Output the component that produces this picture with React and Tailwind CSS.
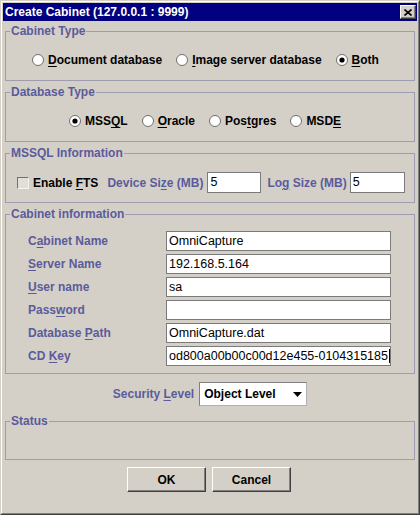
import React from "react";

const U = ({ children }) => (
  <span className="underline decoration-1 underline-offset-[2px]">{children}</span>
);

const Radio = ({ checked }) => (
  <svg width="12" height="12" viewBox="0 0 12 12" className="shrink-0">
    <circle cx="6" cy="6" r="5.5" fill="#ffffff" stroke="#6e6e6e" />
    {checked && <circle cx="6" cy="6" r="2.6" fill="#000000" />}
  </svg>
);

const RadioItem = ({ checked, children }) => (
  <div className="flex items-center gap-[4px]">
    <Radio checked={checked} />
    <span className="font-bold text-black leading-[16px]">{children}</span>
  </div>
);

function Group({ title, className, children }) {
  return (
    <div className={`mx-[2px] border border-[#a09cb0] flex flex-col ${className}`}>
      <span className="-mt-[8px] ml-[4px] px-[1px] self-start bg-[#d4d0c8] text-[#5b5b9c] font-bold leading-[14px]">
        {title}
      </span>
      {children}
    </div>
  );
}

const Field = ({ children, className }) => (
  <div
    className={`h-[20px] bg-white border border-[#7b7b7b] flex items-center pl-[2px] text-[12.5px] text-black font-normal overflow-hidden whitespace-nowrap ${className}`}
  >
    {children}
  </div>
);

const Label = ({ children, className }) => (
  <span className={`text-[#5b5b9c] font-bold leading-[16px] whitespace-nowrap ${className}`}>{children}</span>
);

const Button = ({ children }) => (
  <div className="w-[79px] h-[25px] flex items-center justify-center font-bold text-black border border-t-white border-l-white border-b-[#404040] border-r-[#404040] shadow-[inset_-1px_-1px_0_#808080]">
    {children}
  </div>
);

export default function App() {
  return (
    <div className="w-[420px] h-[515px] bg-[#d4d0c8] border border-t-[#d4d0c8] border-l-[#d4d0c8] border-b-[#404040] border-r-[#404040] font-['Liberation_Sans',Arial,sans-serif] text-[12px]">
      <div className="h-full border border-t-white border-l-white border-b-[#808080] border-r-[#808080] p-[1px] flex flex-col">
        {/* Title bar */}
        <div className="h-[18px] shrink-0 bg-[#000080] flex items-center justify-between">
          <span className="pl-[2px] text-white font-bold leading-[14px]">
            Create Cabinet (127.0.0.1 : 9999)
          </span>
          <div className="mr-[1px] w-[16px] h-[14px] bg-[#d4d0c8] border border-t-white border-l-white border-b-[#404040] border-r-[#404040] shadow-[inset_-1px_-1px_0_#808080] flex items-center justify-center">
            <svg width="8" height="7" viewBox="0 0 8 7">
              <path d="M0.5 0.5 L7.5 6.5 M7.5 0.5 L0.5 6.5" stroke="#000" strokeWidth="1.6" />
            </svg>
          </div>
        </div>

        {/* Cabinet Type */}
        <Group title="Cabinet Type" className="mt-[10px]">
          <div className="mt-[14px] mb-[12px] pr-[9px] h-[16px] flex items-center justify-center gap-[14px]">
            <RadioItem>
              <U>D</U>ocument database
            </RadioItem>
            <RadioItem>
              <U>I</U>mage server database
            </RadioItem>
            <RadioItem checked>
              <U>B</U>oth
            </RadioItem>
          </div>
        </Group>

        {/* Database Type */}
        <Group title="Database Type" className="mt-[11px]">
          <div className="mt-[14px] mb-[12px] pr-[10px] h-[16px] flex items-center justify-center gap-[14px]">
            <RadioItem checked>
              MSS<U>Q</U>L
            </RadioItem>
            <RadioItem>
              <U>O</U>racle
            </RadioItem>
            <RadioItem>
              Pos<U>t</U>gres
            </RadioItem>
            <RadioItem>
              MSD<U>E</U>
            </RadioItem>
          </div>
        </Group>

        {/* MSSQL Information */}
        <Group title="MSSQL Information" className="mt-[11px]">
          <div className="mt-[12px] mb-[9px] h-[21px] flex items-center">
            <div className="ml-[11px] w-[12px] h-[12px] bg-[#e2dfd8] border border-t-[#707070] border-l-[#707070] border-b-[#f4f4f4] border-r-[#f4f4f4]" />
            <span className="ml-[4px] font-bold text-black leading-[16px]">
              Enable <U>F</U>TS
            </span>
            <Label className="ml-[9px]">
              Device Si<U>z</U>e (MB)
            </Label>
            <Field className="ml-[4px] w-[54px] h-[21px]">5</Field>
            <Label className="ml-[6px]">
              Lo<U>g</U> Size (MB)
            </Label>
            <Field className="ml-[3px] w-[55px] h-[21px]">5</Field>
          </div>
        </Group>

        {/* Cabinet information */}
        <Group title="Cabinet information" className="mt-[11px]">
          <div className="mt-[10px] mb-[7px] ml-[22px] grid grid-cols-[138px_225px] gap-y-[3px] items-center">
            <Label>
              C<U>a</U>binet Name
            </Label>
            <Field>OmniCapture</Field>
            <Label>
              <U>S</U>erver Name
            </Label>
            <Field>192.168.5.164</Field>
            <Label>
              <U>U</U>ser name
            </Label>
            <Field>sa</Field>
            <Label>
              Pass<U>w</U>ord
            </Label>
            <Field />
            <Label>
              Database <U>P</U>ath
            </Label>
            <Field>OmniCapture.dat</Field>
            <Label>
              CD <U>K</U>ey
            </Label>
            <Field>
              <span>od800a00b00c00d12e455-0104315185</span>
              <span className="ml-[1px] w-[1px] h-[14px] bg-black shrink-0" />
            </Field>
          </div>
        </Group>

        {/* Security Level */}
        <div className="mt-[8px] h-[24px] flex items-center justify-center gap-[5px]">
          <Label>
            Security <U>L</U>evel
          </Label>
          <div className="w-[108px] h-[24px] bg-white border border-t-[#808080] border-l-[#808080] border-b-[#b0b0b0] border-r-[#b0b0b0] flex items-center justify-between pl-[4px] pr-[4px]">
            <span className="font-bold text-black">Object Level</span>
            <svg width="9" height="5" viewBox="0 0 9 5">
              <polygon points="0,0 9,0 4.5,5" fill="#000" />
            </svg>
          </div>
        </div>

        {/* Status */}
        <Group title="Status" className="mt-[15px]">
          <div className="h-[31px]" />
        </Group>

        {/* Buttons */}
        <div className="mt-[7px] pr-[2px] flex justify-center gap-[6px]">
          <Button>OK</Button>
          <Button>Cancel</Button>
        </div>
      </div>
    </div>
  );
}
